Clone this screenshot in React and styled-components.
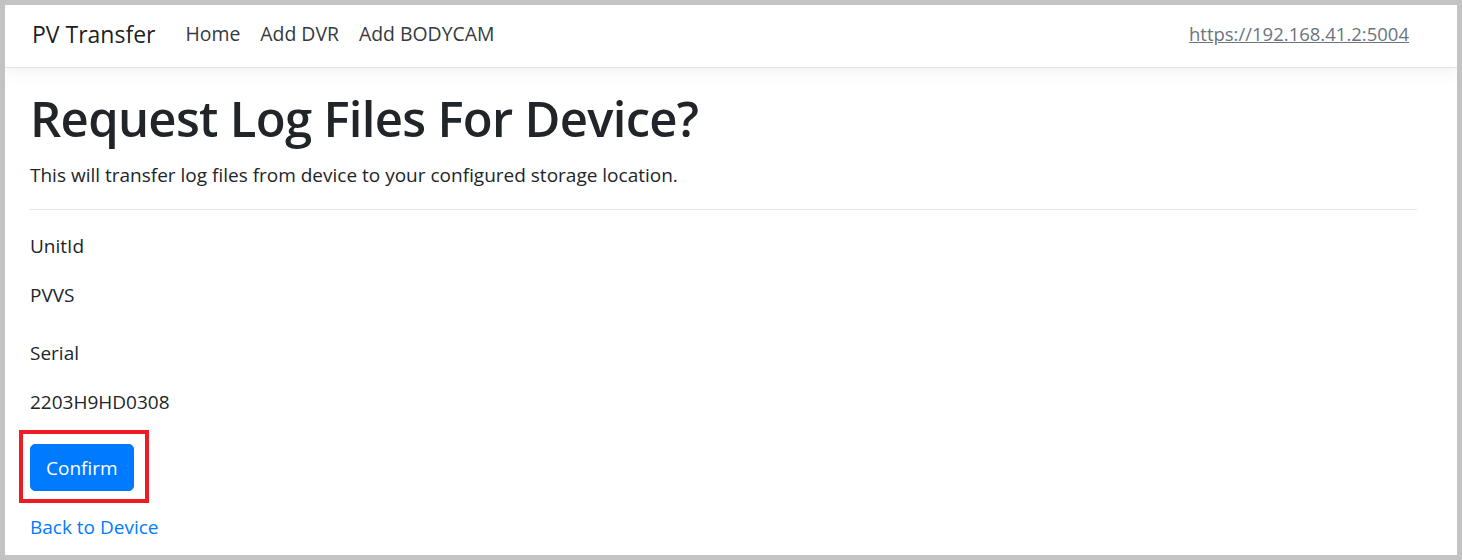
import React from 'react';
import styled, { createGlobalStyle } from 'styled-components';

const GlobalStyle = createGlobalStyle`
    * {
        box-sizing: border-box;
    }

    body {
        margin: 0;
        background: #c3c3c3;
        font-family: 'Open Sans', 'Noto Sans', sans-serif;
        color: #212529;
    }
`;

const fields = [
    { label: 'UnitId', value: 'PVVS' },
    { label: 'Serial', value: '2203H9HD0308' },
];

const App = () => {
    return (
        <>
            <GlobalStyle />
            <Window>
                <Navbar>
                    <Brand href="#">PV Transfer</Brand>
                    <NavList>
                        <NavLink href="#">Home</NavLink>
                        <NavLink href="#">Add DVR</NavLink>
                        <NavLink href="#">Add BODYCAM</NavLink>
                    </NavList>
                    <HostLink href="#">https://192.168.41.2:5004</HostLink>
                </Navbar>
                <Main>
                    <Title>Request Log Files For Device?</Title>
                    <Lead>This will transfer log files from device to your configured storage location.</Lead>
                    <Divider />
                    <FieldList>
                        {fields.map((f) => (
                            <Field key={f.label}>
                                <Label>{f.label}</Label>
                                <Value>{f.value}</Value>
                            </Field>
                        ))}
                    </FieldList>
                    <Highlight>
                        <PrimaryButton type="button">Confirm</PrimaryButton>
                    </Highlight>
                    <BackLink href="#">Back to Device</BackLink>
                </Main>
            </Window>
        </>
    );
};

const Window = styled.div`
    margin: 5px;
    width: 1452px;
    height: 550px;
    background: #fff;
    overflow: hidden;
`;

const Navbar = styled.nav`
    display: flex;
    align-items: center;
    height: 63px;
    padding: 0 48px 5px 27px;
    border-bottom: 1px solid #dee2e6;
    box-shadow: 0 5px 15px rgba(0, 0, 0, 0.05);
`;

const Brand = styled.a`
    font-size: 23px;
    line-height: 30px;
    color: rgba(0, 0, 0, 0.9);
    text-decoration: none;
    margin-right: 20px;
`;

const NavList = styled.div`
    display: flex;
`;

const NavLink = styled.a`
    font-size: 19.4px;
    line-height: 30px;
    padding: 0 10px;
    color: #343a40;
    text-decoration: none;
`;

const HostLink = styled.a`
    margin-left: auto;
    font-size: 18.5px;
    line-height: 30px;
    color: #6c757d;
    text-decoration: underline;
`;

const Main = styled.main`
    padding: 20px 40px 0 25px;
    font-size: 19px;
    line-height: 30px;
`;

const Title = styled.h1`
    margin: 0 0 12px;
    font-size: 49px;
    font-weight: 600;
    letter-spacing: -0.7px;
    line-height: 60px;
    color: #212529;
`;

const Lead = styled.p`
    margin: 0 0 19px;
`;

const Divider = styled.hr`
    margin: 0 0 21px;
    border: 0;
    border-top: 1px solid rgba(0, 0, 0, 0.1);
`;

const FieldList = styled.div`
    display: grid;
    gap: 28px;
    margin-bottom: 13px;
`;

const Field = styled.div`
    display: grid;
    gap: 19px;
`;

const Label = styled.div``;

const Value = styled.div``;

const Highlight = styled.div`
    width: fit-content;
    margin-left: -11px;
    padding: 10px 11px 8px 7px;
    border: 4px solid #ed1c24;
`;

const PrimaryButton = styled.button`
    display: block;
    padding: 7.5px 15px;
    border: 1px solid #007bff;
    border-radius: 5px;
    background: #007bff;
    color: #fff;
    font-family: inherit;
    font-size: 19px;
    line-height: 30px;
    cursor: pointer;
`;

const BackLink = styled.a`
    display: block;
    margin-top: 9px;
    color: #007bff;
    text-decoration: none;
`;

export default App;
